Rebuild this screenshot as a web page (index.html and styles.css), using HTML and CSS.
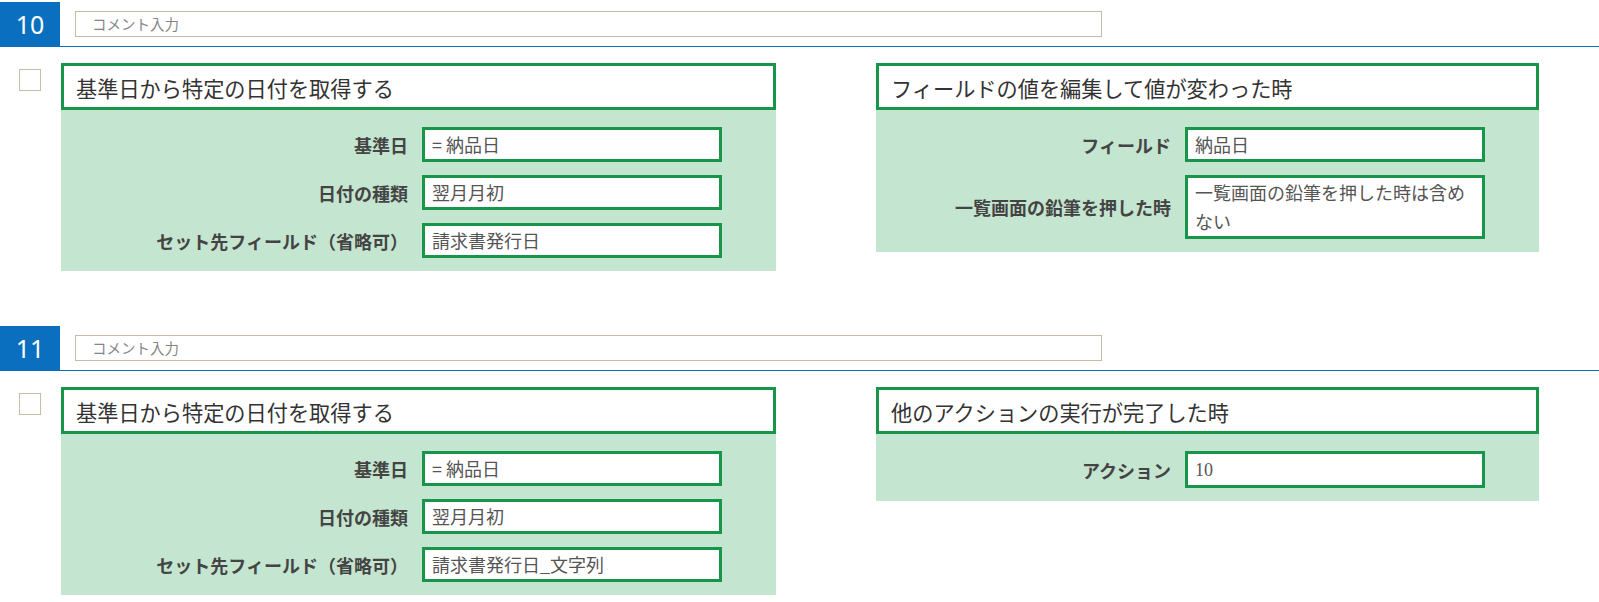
FILE: index.html
```html
<!DOCTYPE html>
<html lang="ja">
<head>
<meta charset="utf-8">
<title>Actions</title>
<link rel="stylesheet" href="styles.css">
</head>
<body>
<div class="block">
  <div class="head">
    <div class="num">10</div>
    <div class="comment">コメント入力</div>
  </div>
  <div class="body">
    <div class="check"></div>
    <div class="panel wide">
      <div class="title">基準日から特定の日付を取得する</div>
      <div class="fields">
        <div class="row"><div class="label">基準日</div><div class="input">= 納品日</div></div>
        <div class="row"><div class="label">日付の種類</div><div class="input">翌月月初</div></div>
        <div class="row"><div class="label">セット先フィールド（省略可）</div><div class="input">請求書発行日</div></div>
      </div>
    </div>
    <div class="panel narrow">
      <div class="title">フィールドの値を編集して値が変わった時</div>
      <div class="fields">
        <div class="row"><div class="label">フィールド</div><div class="input">納品日</div></div>
        <div class="row"><div class="label">一覧画面の鉛筆を押した時</div><div class="input">一覧画面の鉛筆を押した時は含めない</div></div>
      </div>
    </div>
  </div>
</div>

<div class="block second">
  <div class="head">
    <div class="num">11</div>
    <div class="comment">コメント入力</div>
  </div>
  <div class="body">
    <div class="check"></div>
    <div class="panel wide">
      <div class="title">基準日から特定の日付を取得する</div>
      <div class="fields">
        <div class="row"><div class="label">基準日</div><div class="input">= 納品日</div></div>
        <div class="row"><div class="label">日付の種類</div><div class="input">翌月月初</div></div>
        <div class="row"><div class="label">セット先フィールド（省略可）</div><div class="input">請求書発行日_文字列</div></div>
      </div>
    </div>
    <div class="panel narrow">
      <div class="title">他のアクションの実行が完了した時</div>
      <div class="fields">
        <div class="row"><div class="label">アクション</div><div class="input"><span class="digits">10</span></div></div>
      </div>
    </div>
  </div>
</div>
</body>
</html>
```

FILE: styles.css
```css
body {
  margin: 0;
  background: #ffffff;
  font-family: "Noto Sans CJK JP", "Noto Sans", sans-serif;
}

.block {
  padding-top: 2px;
}

.block.second {
  margin-top: 53px;
}

.head {
  display: flex;
  align-items: flex-start;
  border-bottom: 1px solid #0a6fbf;
}

.num {
  width: 60px;
  height: 44px;
  background: #0a6fbf;
  color: #ffffff;
  font-family: "Noto Sans", sans-serif;
  font-size: 25px;
  display: flex;
  align-items: center;
  justify-content: center;
}

.comment {
  margin: 9px 0 0 15px;
  width: 1027px;
  height: 26px;
  box-sizing: border-box;
  border: 1px solid #c9b9a7;
  padding-left: 16px;
  font-size: 14.5px;
  line-height: 24px;
  color: #858585;
}

.body {
  display: flex;
  align-items: flex-start;
  padding-top: 16px;
}

.check {
  width: 22px;
  height: 22px;
  box-sizing: border-box;
  border: 1px solid #cbbcaa;
  background: #ffffff;
  margin: 6px 20px 0 19px;
}

.panel.wide {
  width: 715px;
}

.panel.narrow {
  width: 663px;
  margin-left: 100px;
}

.title {
  height: 47px;
  box-sizing: border-box;
  border: 3px solid #17964a;
  background: #ffffff;
  padding: 2px 0 0 12px;
  font-size: 21.2px;
  color: #333333;
  display: flex;
  align-items: center;
}

.fields {
  background: #c4e5cf;
  padding: 17px 54px 13px 0;
  display: flex;
  flex-direction: column;
  gap: 13px;
}

.row {
  display: flex;
  align-items: center;
  justify-content: flex-end;
  gap: 14px;
}

.label {
  font-size: 18px;
  font-weight: bold;
  color: #444444;
  text-align: right;
  white-space: nowrap;
}

.input {
  flex-shrink: 0;
  width: 300px;
  min-height: 35px;
  box-sizing: border-box;
  border: 3px solid #17964a;
  background: #ffffff;
  padding: 0 7px;
  font-size: 18px;
  line-height: 29px;
  color: #555555;
}

.digits {
  font-family: "Liberation Serif", serif;
}
```
